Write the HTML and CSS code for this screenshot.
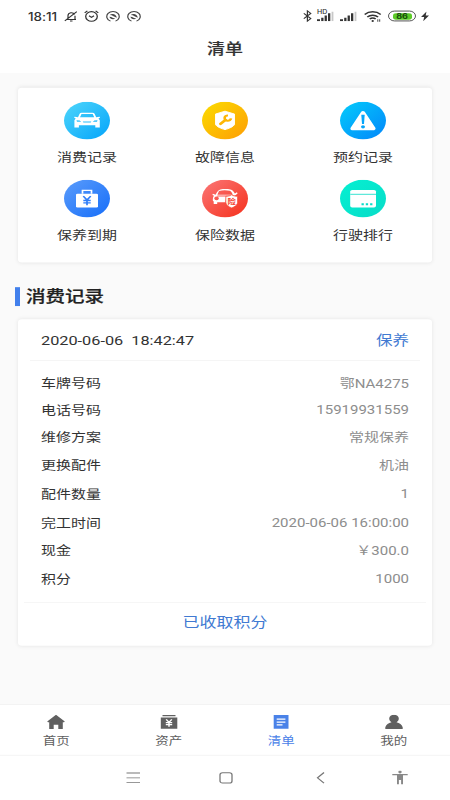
FILE: index.html
```html
<!DOCTYPE html>
<html lang="zh-CN">
<head>
<meta charset="utf-8">
<title>清单</title>
<link rel="stylesheet" href="styles.css">
</head>
<body>
<div class="screen">
  <header class="top">
    <div class="status">
      <span class="time">18:11</span>
      <svg class="bell" width="14" height="14" viewBox="0 0 14 14" fill="none" stroke="#333" stroke-width="1.2"><path d="M2.500 10.800h9.500M4 10V6a3.400 3.800 0 0 1 6.500-1.300M11 6.200v4.300M6 12.500h2.500M.8 12.500 12.800 1.200"/></svg>
      <svg class="alarm" width="15" height="15" viewBox="0 0 15 15" fill="none" stroke="#333" stroke-width="1.300"><circle cx="7.500" cy="8" r="5.800"/><path d="M.7 3.800 3.400 1.300M14.300 3.800 11.600 1.300M5 7.200 7.500 9.200 10 7.200"/></svg>
      <svg class="swirl" width="14" height="14" viewBox="0 0 14 14" fill="none" stroke="#444" stroke-width="1.200"><path d="M4.500 12.800A6.200 6.200 0 1 1 9.500 12.800"/><path d="M3.700 5.300C6 2.600 10.500 4 10.800 8.500 8.500 8 6.500 5.200 3.700 5.300Z" fill="#444" stroke="none"/><path d="M3.300 7.300c1 3.300 4.200 3.700 6 2.200-2-.2-3.200-1.900-6-2.200Z" fill="#444" stroke="none"/></svg>
      <svg class="swirl" width="14" height="14" viewBox="0 0 14 14" fill="none" stroke="#444" stroke-width="1.200"><path d="M4.500 12.800A6.200 6.200 0 1 1 9.500 12.800"/><path d="M3.700 5.300C6 2.600 10.500 4 10.800 8.500 8.500 8 6.500 5.200 3.700 5.300Z" fill="#444" stroke="none"/><path d="M3.300 7.300c1 3.300 4.200 3.700 6 2.200-2-.2-3.200-1.900-6-2.200Z" fill="#444" stroke="none"/></svg>
      <span class="spacer"></span>
      <svg class="bt" width="9" height="15" viewBox="0 0 9 15" fill="none" stroke="#333" stroke-width="1.200"><path d="M.8 4.200 7.800 10.600 4.400 13.800V1.200L7.800 4.400.8 10.800"/></svg>
      <span class="signal hd"><b>HD</b><svg width="17" height="12" viewBox="0 0 17 12" fill="#333"><path d="M0 9.500h3V12H0zM4.200 7.500h2.300V12H4.200zM7.600 5h2.300v7H7.600zM11 2h2.300v10H11z"/><path d="M14.600 0h1.800v12h-1.800z" fill="#c8c8c8"/></svg></span>
      <span class="signal"><svg width="17" height="12" viewBox="0 0 17 12" fill="#333"><path d="M0 9.500h3V12H0zM4.200 7.500h2.300V12H4.200zM7.600 5h2.300v7H7.600zM11 2h2.300v10H11z"/><path d="M14.600 0h1.800v12h-1.800z" fill="#c8c8c8"/></svg></span>
      <svg class="wifi" width="18" height="14" viewBox="0 0 18 14" fill="none" stroke="#333" stroke-width="1.700"><path d="M.7 4.600a11.500 11.500 0 0 1 16 0M3.300 7.600a8 8 0 0 1 10.800 0M5.700 10.200a4.600 4.600 0 0 1 6 0"/><circle cx="8.700" cy="12.500" r="1.200" fill="#333" stroke="none"/><path d="M13.800 10.500v3M15.700 10.500v3" stroke-width="1"/></svg>
      <span class="battery"><span class="charge">86</span></span>
      <svg class="bolt" width="8" height="12" viewBox="0 0 8 12" fill="#333"><path d="M5.500 0 0 6.700h3.200L2.200 12 8 5H4.700z"/></svg>
    </div>
    <h1 class="title">清单</h1>
  </header>

  <main class="content">
    <section class="card menu">
      <a class="entry"><svg class="disc" viewBox="0 0 46 46">
        <defs><linearGradient id="sky" x2="1" y2="1"><stop stop-color="#4ed6fb"/><stop offset="1" stop-color="#04a4fa"/></linearGradient></defs>
        <circle cx="23" cy="23" r="23" fill="url(#sky)"/>
        <path fill="#fff" fill-rule="evenodd" d="M15.500 15q.5-1.700 2.200-1.700h10.800q1.700 0 2.200 1.700l1.500 3.800 3.300-.6c1 .2.600 1.800-1 2.100l1.300 2.200v8.800h-4.500v-2.800H14.900v2.800h-4.500v-8.800l1.300-2.200c-1.600-.3-2-1.900-1-2.100l3.300.6zM17.500 14.800l-1.500 4.200h14.200l-1.500-4.200zM12.500 22.500l.5 2h4.200l-1.500-1.500zM33.500 22.500l-3.200.5-1.500 1.500H33zM18.800 24h8.500l-.6 1.300h-7.300z"/></svg><span>消费记录</span></a>
      <a class="entry"><svg class="disc" viewBox="0 0 46 46">
        <defs><linearGradient id="gold" x2="1" y2="1"><stop stop-color="#fbdc00"/><stop offset="1" stop-color="#fe9d05"/></linearGradient></defs>
        <circle cx="23" cy="23" r="23" fill="url(#gold)"/>
        <path fill="#fff" stroke="#fff" stroke-linejoin="round" d="M23 11.500 32.500 15v12.500c-1 3-5.500 5-9.500 6.500-4-1.500-8.500-3.500-9.500-6.500V15z"/>
        <path fill="none" stroke="#fdb604" stroke-width="3" stroke-linecap="round" d="M18.500 27 23.500 22.200"/><path fill="none" stroke="#fdb604" stroke-width="2.600" d="M26 16.800a3.200 3.200 0 1 0 3 3.600"/></svg><span>故障信息</span></a>
      <a class="entry"><svg class="disc" viewBox="0 0 46 46">
        <defs><linearGradient id="azure" x2="1" y2="1"><stop stop-color="#04ccfb"/><stop offset="1" stop-color="#0286fa"/></linearGradient></defs>
        <circle cx="23" cy="23" r="23" fill="url(#azure)"/>
        <path fill="#fff" stroke="#fff" stroke-width="4" stroke-linejoin="round" d="M23 13.300 33.600 32.800H12.400z"/>
        <path fill="#06a5fa" d="M21.300 16h3.400l-.7 11h-2z"/><circle cx="23" cy="30.500" r="2" fill="#06a5fa"/></svg><span>预约记录</span></a>
      <a class="entry"><svg class="disc" viewBox="0 0 46 46">
        <defs><linearGradient id="blue" x2="1" y2="1"><stop stop-color="#5b9cfb"/><stop offset="1" stop-color="#166ef9"/></linearGradient></defs>
        <circle cx="23" cy="23" r="23" fill="url(#blue)"/>
        <rect x="12" y="17" width="22" height="17" rx="1.500" fill="#fff"/>
        <path fill="none" stroke="#fff" stroke-width="1.700" d="M18.500 17v-4h9v4"/>
        <path fill="none" stroke="#2f7df9" stroke-width="1.700" d="M19.300 20 23 24.800 26.700 20M23 24.500V31M19.300 25.300h7.400M19.300 28.200h7.400"/></svg><span>保养到期</span></a>
      <a class="entry"><svg class="disc" viewBox="0 0 46 46">
        <defs><linearGradient id="red" x2="1" y2="1"><stop stop-color="#fb7777"/><stop offset="1" stop-color="#f5301b"/></linearGradient></defs>
        <circle cx="23" cy="23" r="23" fill="url(#red)"/>
        <path fill="#fff" fill-rule="evenodd" d="M13.600 18.500c1.200-3.200 2.400-6 4.800-6.600 3.200-.8 7-.7 10 0 2.400.6 3.300 3 4.500 5l2-1.700.7 1.500-2.500 2.500H15.500c-.6 1.400-.1 1.300.7 1.300h8l-.8 7h-8.200v2.200h-3.500v-3l-.9-1.200c0-3 .3-4.500 1.300-5.800l-1.700-1 .5-1.600zM17 13.700l-1.600 4.600h15.500c-1.200-2.500-1.800-4-3.200-4.700-3.400-1-7.400-.8-10.700.1zM14.500 20.500a2.300 2.300 0 1 0 .1 0z"/>
        <path fill="#fff" stroke="#f5432f" stroke-width=".8" d="M23.800 20.200c2.300 0 4.500-.6 5.800-1.800 1.400 1.200 3.600 1.800 6 1.800v7.300c0 3.200-3 5.600-6 6.900-2.900-1.300-5.800-3.700-5.800-6.900z"/>
        <text class="seal" x="29.700" y="29.500" text-anchor="middle">险</text></svg><span>保险数据</span></a>
      <a class="entry"><svg class="disc" viewBox="0 0 46 46">
        <defs><linearGradient id="mint" x2="1" y2="1"><stop stop-color="#05f0d2"/><stop offset="1" stop-color="#08dcc8"/></linearGradient></defs>
        <circle cx="23" cy="23" r="23" fill="url(#mint)"/>
        <rect x="10.200" y="12.500" width="25.800" height="21.300" rx="2" fill="#fff"/><path fill="#60e8da" d="M10.200 17h25.800v1.600H10.200z"/>
        <path fill="#08dcc8" d="M21.500 28.800h2.300v2.300h-2.300zM25.800 28.800h2.300v2.300h-2.300zM30.100 28.800h2.300v2.300h-2.300z"/></svg><span>行驶排行</span></a>
    </section>

    <h2 class="heading">消费记录</h2>

    <section class="card record">
      <div class="record-head"><span class="date">2020-06-06&nbsp; 18:42:47</span><span class="kind">保养</span></div>
      <dl class="rows">
        <div class="row first"><dt>车牌号码</dt><dd>鄂NA4275</dd></div>
        <div class="row second"><dt>电话号码</dt><dd class="num">15919931559</dd></div>
        <div class="row"><dt>维修方案</dt><dd>常规保养</dd></div>
        <div class="row"><dt>更换配件</dt><dd>机油</dd></div>
        <div class="row"><dt>配件数量</dt><dd class="num">1</dd></div>
        <div class="row"><dt>完工时间</dt><dd class="num">2020-06-06 16:00:00</dd></div>
        <div class="row"><dt>现金</dt><dd>￥300.0</dd></div>
        <div class="row"><dt>积分</dt><dd class="num">1000</dd></div>
      </dl>
      <div class="collected">已收取积分</div>
    </section>
  </main>

  <nav class="tabs">
    <a class="tab"><svg width="18" height="18" viewBox="0 0 18 18" fill="#606060"><path d="M9 0 17.800 8.300 17 9.300h-1.200V17.500h-4.500v-5.200H6.700v5.200H2.200V9.300H1L.2 8.300z"/></svg><span>首页</span></a>
    <a class="tab"><svg width="18" height="18" viewBox="0 0 18 18"><path fill="#606060" d="M2.500.3h13v1.700h-13zM.8 3.500h16.500v13.700H.8z"/><path fill="none" stroke="#fff" stroke-width="1.500" d="M6.200 5.800 9 9.300l2.800-3.500M9 9.300v5.500M5.800 9.800h6.400M5.800 12.200h6.400"/></svg><span>资产</span></a>
    <a class="tab active"><svg width="18" height="18" viewBox="0 0 18 18"><path fill="#4a82e8" d="M1.700.3h14.800v17H1.700z"/><path fill="none" stroke="#fff" stroke-width="1.500" d="M4.700 5.500h8.700M4.700 9h8.700M4.700 12.500h5.800"/></svg><span>清单</span></a>
    <a class="tab"><svg width="18" height="18" viewBox="0 0 18 18" fill="#606060"><path d="M9 0a4.800 4.800 0 0 1 4.800 4.800c0 2-1 3.500-2.300 4.400 3 1 5.500 2.800 6.200 6.300v1.900H.3v-1.900c.7-3.500 3.200-5.300 6.200-6.300-1.300-.9-2.300-2.400-2.300-4.400A4.800 4.800 0 0 1 9 0z"/></svg><span>我的</span></a>
  </nav>

  <div class="system">
    <svg width="16" height="18" viewBox="0 0 16 18" fill="none" stroke="#777" stroke-width="1.100"><path d="M1.500 3.200H15M1.500 9H15M1.500 14.800H15"/></svg>
    <svg width="16" height="18" viewBox="0 0 16 18" fill="none" stroke="#777" stroke-width="1.300"><rect x="2" y="2.700" width="12" height="12.600" rx="2.500"/></svg>
    <svg width="16" height="18" viewBox="0 0 16 18" fill="none" stroke="#777" stroke-width="1.300"><path d="M11 2.500 4.500 9l6.500 6.500"/></svg>
    <svg width="16" height="18" viewBox="0 0 16 18" fill="#888"><circle cx="8" cy="1.900" r="1.700"/><path d="M.3 4.200h15.400v1.700H11v11H9.100v-5.200H6.900v5.200H5v-11H.3z"/></svg>
  </div>
</div>
</body>
</html>
```
FILE: styles.css
```css
* {
  box-sizing: border-box;
}

body {
  margin: 0;
  height: 800px;
  overflow: hidden;
  background: #fff;
  color: #333;
  font-family: Roboto, "Noto Sans CJK SC", sans-serif;
}

/* A 450x975 phone layout, compressed vertically into the 450x800 window. */
.screen {
  display: flex;
  flex-direction: column;
  width: 450px;
  height: 975px;
  margin-bottom: -175px;
  background: #fafafa;
  transform: scaleY(0.8205);
  transform-origin: 0 0;
}

.top {
  height: 89px;
  background: #fff;
}

.status {
  display: flex;
  align-items: center;
  height: 39px;
  padding: 0 21px 0 28px;
}

.time {
  width: 36px;
  font: 500 13.5px/16px Inter, sans-serif;
  letter-spacing: -0.1px;
  white-space: nowrap;
}

.alarm { margin-left: 6px; }
.swirl { margin-left: 7px; }
.spacer { flex: 1; }

.signal {
  display: flex;
  margin-left: 6px;
}

.signal.hd {
  position: relative;
  margin-left: 5px;
}

.signal b {
  position: absolute;
  left: 0;
  top: -3px;
  font: 500 7px/8px Inter, sans-serif;
}

.wifi { margin-left: 7px; }

.battery {
  width: 28px;
  height: 13px;
  margin-left: 6px;
  padding: 1.5px 3.5px;
  border: 1px solid #444;
  border-radius: 7px;
}

.charge {
  display: block;
  height: 8px;
  border-radius: 3px;
  background: #5ccb28;
  color: #174a0c;
  font: 700 9px/8px Inter, sans-serif;
  text-align: center;
}

.bolt { margin-left: 5px; }

.title {
  margin: 5px 0 0;
  font-size: 18px;
  line-height: 32px;
  font-weight: 500;
  text-align: center;
  -webkit-text-stroke: 0.2px currentColor;
}

.content {
  flex: 1;
  padding: 18px 18px 0;
}

.card {
  border-radius: 4px;
  background: #fff;
  box-shadow: 0 0 5px rgba(0, 0, 0, 0.09);
}

.menu {
  display: grid;
  grid-template-columns: repeat(3, 138px);
  grid-auto-rows: 95px;
  height: 213px;
  padding-top: 17px;
}

.entry {
  display: flex;
  flex-direction: column;
  align-items: center;
  font-size: 15px;
  line-height: 22px;
}

.disc {
  width: 46px;
  height: 46px;
  margin-bottom: 12px;
}

.seal {
  fill: #f5432f;
  font: 700 8.5px "Noto Sans CJK SC", sans-serif;
}

.heading {
  display: flex;
  align-items: center;
  height: 23px;
  margin: 30px 0 16px -3px;
  color: #222;
  font-size: 19.5px;
  line-height: 23px;
  font-weight: 500;
  -webkit-text-stroke: 0.3px currentColor;
}

.heading::before {
  content: "";
  width: 5px;
  height: 23px;
  margin-right: 6px;
  background: #4280ec;
}

.record {
  height: 398px;
}

.record-head {
  display: flex;
  align-items: center;
  justify-content: space-between;
  height: 51px;
  margin: 0 12px;
  padding: 0 11px;
  border-bottom: 1px solid #f3f3f3;
  font-size: 16.3px;
}

.kind,
.collected {
  color: #417ad2;
}

.kind {
  font-size: 16.5px;
}

.rows {
  height: 295px;
  margin: 0 6px;
  padding: 10px 17px 0;
  border-bottom: 1px solid #f3f3f3;
  font-size: 15px;
}

.row {
  display: flex;
  align-items: center;
  justify-content: space-between;
  height: 34.6px;
}

.row.first {
  height: 33px;
}

.row.second {
  height: 32px;
}

.row dd {
  margin: 0;
  color: #8d8d8d;
}

.row .num {
  padding-top: 2px;
}

.row.second .num {
  padding-top: 1px;
}

.collected {
  font-size: 17px;
  line-height: 47px;
  text-align: center;
}

.tabs {
  display: grid;
  grid-template-columns: repeat(4, 1fr);
  height: 63px;
  border-top: 1px solid #f1f1f1;
  border-bottom: 1px solid #ececec;
  background: #fff;
}

.tab {
  display: flex;
  flex-direction: column;
  align-items: center;
  padding-top: 12px;
  color: #606060;
  font-size: 13.5px;
  line-height: 18px;
}

.tab span {
  margin-top: 5px;
}

.tab.active {
  color: #4a82e8;
}

.system {
  display: grid;
  grid-template-columns: 93px 95px 79px 16px;
  align-items: center;
  height: 54px;
  padding-left: 125px;
  background: #fff;
}
```
